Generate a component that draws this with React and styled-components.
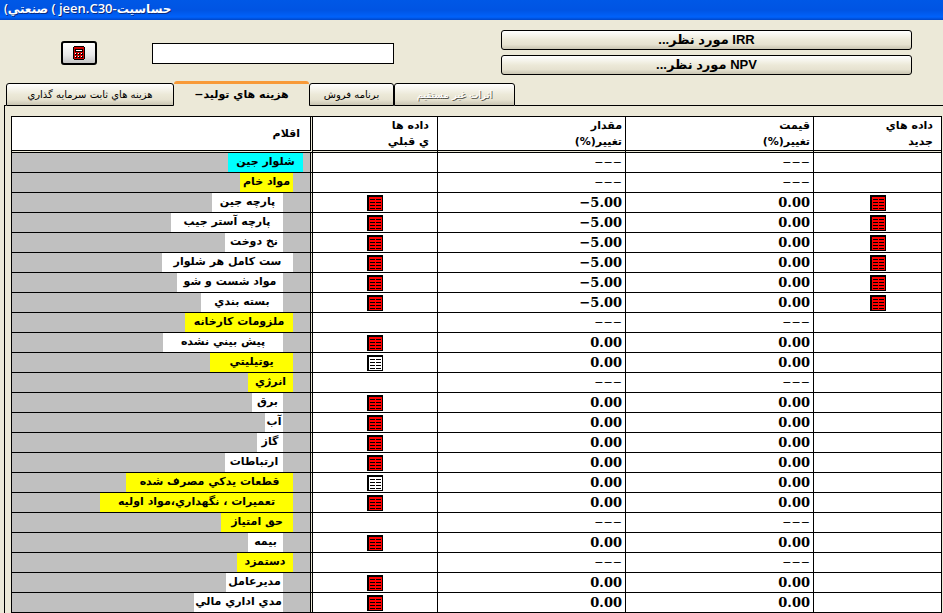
import React from 'react';
import styled, { createGlobalStyle, css } from 'styled-components';

const GlobalStyle = createGlobalStyle`
  * {
    box-sizing: border-box;
  }
  body {
    margin: 0;
    background: #ece9d8;
    color: #000;
    font-family: 'DejaVu Sans', sans-serif;
    overflow: hidden;
  }
`;

const TitleBar = styled.header`
  height: 20px;
  padding: 0 4px;
  background: linear-gradient(#0058e6, #0054e3 50%, #0062fb 85%, #0046c8);
  color: #fff;
  font: 600 12px/16px 'Open Sans', 'DejaVu Sans', sans-serif;
  text-shadow: 1px 1px 0 #0a2a7c;
  white-space: nowrap;
`;

const FileName = styled.span`
  font-size: 13px;
`;

const Toolbar = styled.div`
  display: flex;
  align-items: flex-start;
  height: 61px;
  padding: 10px 31px 0 61px;
`;

const raised = css`
  border: 1px solid #000;
  border-radius: 3px;
  background: linear-gradient(#fff, #ece9d8 50%, #e6e2d0 75%, #c9c5b2);
  color: #000;
`;

const CalcButton = styled.button`
  ${raised}
  display: grid;
  place-items: center;
  width: 36px;
  height: 24px;
  margin-top: 11px;
  padding: 0;
  border-width: 2px;
  background: linear-gradient(#fff, #e8e8e8 60%, #c4c4c4);
`;

const NameInput = styled.input`
  width: 242px;
  height: 21px;
  margin: 13px 0 0 55px;
  padding: 0 4px;
  border: 1px solid #000;
  background: #fff;
`;

const Targets = styled.div`
  flex: 1;
  display: grid;
  gap: 5px;
  margin-left: 107px;
`;

const TargetButton = styled.button`
  ${raised}
  height: 20px;
  padding: 0;
  font: bold 13px/16px 'Liberation Sans', 'DejaVu Sans', sans-serif;
`;

const Tabs = styled.div`
  display: flex;
  align-items: flex-end;
  height: 25px;
  padding-left: 4px;

  &::before,
  &::after {
    content: '';
    border-bottom: 1px solid #000;
  }
  &::before {
    width: 2px;
  }
  &::after {
    flex: 1;
  }
`;

const Tab = styled.button`
  ${raised}
  width: ${({ $width }) => $width}px;
  height: 23px;
  padding: 0;
  border-radius: 3px 3px 0 0;
  font: 10px/18px 'DejaVu Sans', sans-serif;
  white-space: nowrap;

  ${({ $active }) => $active && css`
    height: 25px;
    border: 0;
    border-top: 3px solid #f89a38;
    background: #ece9d8;
    font-size: 11px;
    font-weight: bold;
  `}

  &:disabled {
    color: #fff;
    text-shadow: 1px 1px 0 #55534a;
  }
`;

const Panel = styled.main`
  margin-left: 4px;
  padding: 10px 1px 0 6px;
  border-left: 1px solid #000;
`;

const Grid = styled.table`
  width: 100%;
  table-layout: fixed;
  border-collapse: separate;
  border-spacing: 0;
  border: solid #000;
  border-width: 1px 0 0 1px;
  background: #ece9d8;
`;

const Col = styled.col`
  width: ${({ $width }) => ($width ? `${$width}px` : 'auto')};
`;

const HeadCell = styled.th`
  height: 36px;
  padding: 0 ${({ $pad }) => $pad || 3}px 0 0;
  border-right: 1px solid #000;
  border-bottom: 3px double #000;
  background: #fff;
  background-clip: padding-box;
  font: bold 11px/16px 'DejaVu Sans', sans-serif;
  text-align: right;

  &:first-child {
    border-right: 3px double #000;
  }
`;

const Cell = styled.td`
  height: 20px;
  padding: 0 3px 0 0;
  border-right: 1px solid #000;
  border-bottom: 1px solid #000;
  background: #fff;
  font: bold 13px/18px 'DejaVu Serif', serif;
  text-align: right;
`;

const IconCell = styled(Cell)`
  padding: 0;
  text-align: center;
`;

const Dashes = styled.span`
  font: 11px/18px 'DejaVu Sans', sans-serif;
`;

const ItemCell = styled.th`
  height: 20px;
  padding: 0 ${({ $indent }) => 7 + $indent * 10}px 0 0;
  border-right: 3px double #000;
  border-bottom: 1px solid #000;
  background: #c0c0c0;
  background-clip: padding-box;
`;

const tones = { product: '#00ffff', group: '#ffff00', item: '#ffffff' };

const Item = styled.div`
  width: ${({ $width }) => $width}px;
  height: 19px;
  margin-left: auto;
  background: ${({ $tone }) => tones[$tone]};
  font: bold 11px/18px 'DejaVu Sans', sans-serif;
  text-align: center;
  white-space: nowrap;
`;

const SheetButton = styled.button`
  display: block;
  width: 16px;
  height: 16px;
  margin: 1px auto 0;
  padding: 0;
  border: 0;
  background: none;
`;

function CalculatorIcon() {
  return (
    <svg width="12" height="14" viewBox="0 0 12 14" shapeRendering="crispEdges">
      <path d="M1 0h10v1h1v12h-1v1H1v-1H0V1h1z" fill="#000" />
      <path d="M1 1h10v12H1z" fill="#d00000" />
      <path d="M2 3h8v3H2z" fill="#000" />
      <path d="M3 4h6v1H3z" fill="#fff" />
      <path d="M2 7h2v2H2zM5 7h2v2H5zM8 7h2v2H8zM2 10h2v2H2zM5 10h2v2H5zM8 10h2v2H8z" fill="#000" />
      <path d="M2 7h1v1H2zM5 7h1v1H5zM8 7h1v1H8zM2 10h1v1H2zM5 10h1v1H5zM8 10h1v1H8z" fill="#fff" />
    </svg>
  );
}

function SheetIcon({ fill }) {
  return (
    <svg width="16" height="16" viewBox="0 0 16 16" shapeRendering="crispEdges" display="block">
      <path d="M0 0h16v16H0z" fill="#000" />
      <path d="M2 2h13v13H2z" fill={fill} />
      <path d="M3 4h5v1H3zM9 4h5v1H9zM3 7h5v1H3zM9 7h5v1H9zM3 10h5v1H3zM9 10h5v1H9zM3 13h5v1H3zM9 13h5v1H9z" fill="#000" />
    </svg>
  );
}

const columns = [301, 125, 188, 188, null];

const headings = [
  { lines: ['اقلام'], pad: 10 },
  { lines: ['داده ها', 'ي قبلي'], pad: 8 },
  { lines: ['مقدار', 'تغيير(%)'] },
  { lines: ['قيمت', 'تغيير(%)'] },
  { lines: ['داده هاي', 'جديد'], pad: 8 },
];

const rows = [
  { name: 'شلوار جين', tone: 'product', indent: 0, width: 75 },
  { name: 'مواد خام', tone: 'group', indent: 1, width: 53 },
  { name: 'پارچه جين', tone: 'item', indent: 2, width: 71, sheet: 'red', amount: '−5.00' },
  { name: 'پارچه آستر جيب', tone: 'item', indent: 2, width: 112, sheet: 'red', amount: '−5.00' },
  { name: 'نخ دوخت', tone: 'item', indent: 2, width: 58, sheet: 'red', amount: '−5.00' },
  { name: 'ست كامل هر شلوار', tone: 'item', indent: 1, width: 131, sheet: 'red', amount: '−5.00' },
  { name: 'مواد شست و شو', tone: 'item', indent: 2, width: 106, sheet: 'red', amount: '−5.00' },
  { name: 'بسته بندي', tone: 'item', indent: 2, width: 82, sheet: 'red', amount: '−5.00' },
  { name: 'ملزومات كارخانه', tone: 'group', indent: 1, width: 108 },
  { name: 'پيش بيني نشده', tone: 'item', indent: 2, width: 120, sheet: 'red', amount: '0.00' },
  { name: 'يوتيليتي', tone: 'group', indent: 1, width: 83, sheet: 'white', amount: '0.00' },
  { name: 'انرژي', tone: 'group', indent: 1, width: 45 },
  { name: 'برق', tone: 'item', indent: 2, width: 31, sheet: 'red', amount: '0.00' },
  { name: 'آب', tone: 'item', indent: 2, width: 18, sheet: 'red', amount: '0.00' },
  { name: 'گاز', tone: 'item', indent: 2, width: 26, sheet: 'red', amount: '0.00' },
  { name: 'ارتباطات', tone: 'item', indent: 2, width: 58, sheet: 'red', amount: '0.00' },
  { name: 'قطعات يدكي مصرف شده', tone: 'group', indent: 1, width: 167, sheet: 'white', amount: '0.00' },
  { name: 'تعميرات ، نگهداري،مواد اوليه', tone: 'group', indent: 1, width: 193, sheet: 'red', amount: '0.00' },
  { name: 'حق امتياز', tone: 'group', indent: 1, width: 72 },
  { name: 'بيمه', tone: 'item', indent: 2, width: 35, sheet: 'red', amount: '0.00' },
  { name: 'دستمزد', tone: 'group', indent: 1, width: 56 },
  { name: 'مديرعامل', tone: 'item', indent: 2, width: 57, sheet: 'red', amount: '0.00' },
  { name: 'مدي اداري مالي', tone: 'item', indent: 2, width: 89, sheet: 'red', amount: '0.00' },
];

function Sheet({ color, label }) {
  return (
    <SheetButton type="button" aria-label={label}>
      <SheetIcon fill={color === 'red' ? '#ff0000' : '#ffffff'} />
    </SheetButton>
  );
}

function Row({ row }) {
  const changed = row.amount === '−5.00';
  return (
    <tr>
      <ItemCell scope="row" $indent={row.indent}>
        <Item dir="rtl" $tone={row.tone} $width={row.width}>{row.name}</Item>
      </ItemCell>
      <IconCell>{row.sheet && <Sheet color={row.sheet} label={row.name} />}</IconCell>
      <Cell>{row.amount || <Dashes>−−−</Dashes>}</Cell>
      <Cell>{row.amount ? '0.00' : <Dashes>−−−</Dashes>}</Cell>
      <IconCell>{changed && <Sheet color="red" label={row.name} />}</IconCell>
    </tr>
  );
}

export default function App() {
  return (
    <>
      <GlobalStyle />
      <TitleBar>
        <bdi>(</bdi>
        <bdi>صنعتي</bdi>
        <FileName>{' ( jeen.C30-'}</FileName>
        <bdi>حساسيت</bdi>
      </TitleBar>
      <Toolbar>
        <CalcButton type="button" aria-label="محاسبه"><CalculatorIcon /></CalcButton>
        <NameInput type="text" aria-label="نام" />
        <Targets>
          <TargetButton type="button" dir="rtl">IRR مورد نظر...</TargetButton>
          <TargetButton type="button" dir="rtl">NPV مورد نظر...</TargetButton>
        </Targets>
      </Toolbar>
      <Tabs>
        <Tab type="button" dir="rtl" $width={168}>هزينه هاي ثابت سرمايه گذاري</Tab>
        <Tab type="button" dir="rtl" $width={135} $active>هزينه هاي توليد−</Tab>
        <Tab type="button" dir="rtl" $width={85}>برنامه فروش</Tab>
        <Tab type="button" dir="rtl" $width={121} disabled>اثرات غير مستقيم</Tab>
      </Tabs>
      <Panel>
        <Grid>
          <colgroup>
            {columns.map((width, i) => <Col key={i} $width={width} />)}
          </colgroup>
          <thead>
            <tr>
              {headings.map(({ lines, pad }) => (
                <HeadCell key={lines.join(' ')} scope="col" $pad={pad}>
                  {lines.map((line) => <div key={line} dir="rtl">{line}</div>)}
                </HeadCell>
              ))}
            </tr>
          </thead>
          <tbody>
            {rows.map((row) => <Row key={row.name} row={row} />)}
          </tbody>
        </Grid>
      </Panel>
    </>
  );
}
